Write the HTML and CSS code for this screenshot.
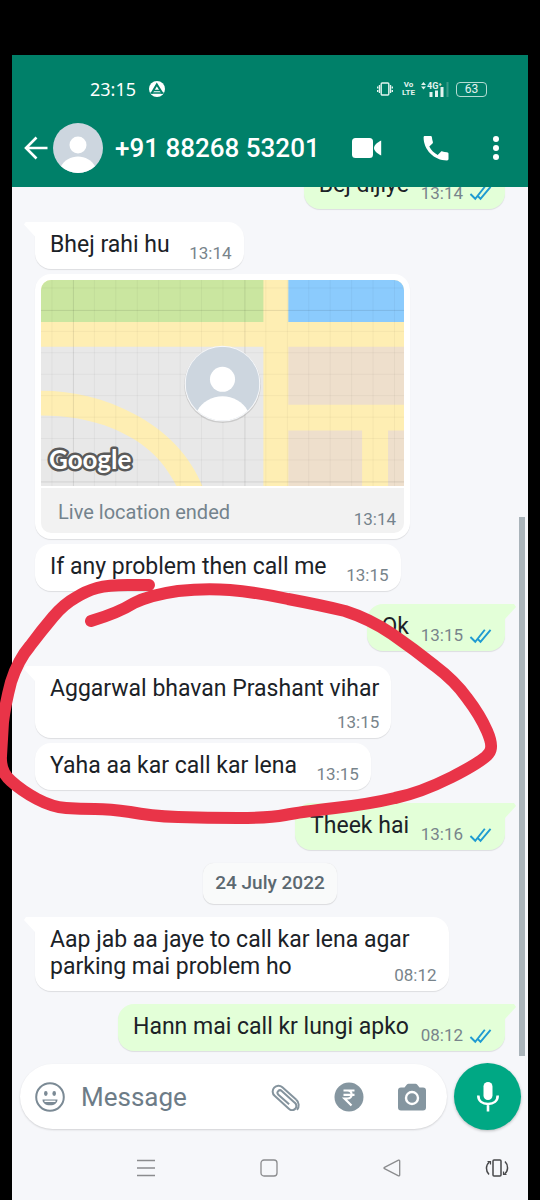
FILE: index.html
```html
<!DOCTYPE html>
<html lang="en">
<head>
<meta charset="utf-8">
<meta name="viewport" content="width=device-width, initial-scale=1">
<title>Chat</title>
<link rel="stylesheet" href="styles.css">
</head>
<body>
<svg class="defs" aria-hidden="true">
  <symbol id="ticks" viewBox="0 0 24 16"><path d="M1.500 9l5 5L16.500 1.500M9.500 11.500l2.500 2.500L22.500 1.500" fill="none" stroke="#1f9bd1" stroke-width="2"/></symbol>
  <symbol id="person" viewBox="0 0 50 50"><circle cx="25" cy="25" r="25" fill="#cdd6df"/><circle cx="25" cy="22" r="8.500" fill="#fff"/><path d="M8 43.300c3-6 10-9.800 17-9.800s14 3.800 17 9.800a25 25 0 0 1-34 0z" fill="#fff"/></symbol>
</svg>
<div class="phone">
  <header class="header">
    <div class="status">
      <span class="clock">23:15</span>
      <svg width="16" height="16" viewBox="0 0 16 16"><circle cx="8" cy="8" r="8" fill="#fff"/><path d="M2.500 12.500L7.800 3.500 13.500 12.500" fill="none" stroke="#008069" stroke-width="2"/><path d="M5 9.500h6M1.500 12h13" stroke="#008069" stroke-width="1.500"/></svg>
      <span class="spacer"></span>
      <svg class="vibrate" width="16" height="14" viewBox="0 0 16 14" fill="none" stroke="#e3f3ef" stroke-width="1.400"><rect x="4.200" y="1" width="7.600" height="12" rx="1"/><path d="M2.500 3v8M13.500 3v8" /><path d="M.7 4.500v2M.7 8v2M15.300 4.500v2M15.300 8v2"/></svg>
      <span class="volte"><span>Vo</span><span>LTE</span></span>
      <svg class="signal" width="30" height="16" viewBox="0 0 30 16"><path d="M0 4l2.500-3L5 4zM0 5.500l2.500 3 2.500-3z" fill="#e3f3ef"/><text x="6" y="8" class="net">4G⁺</text><path d="M8.500 11h3v5h-3zM14 9.500h3v6.500h-3zM19.500 6h3v10h-3z" fill="#e3f3ef"/><path d="M25.500 1h2v15h-2z" fill="#3a9a88"/></svg>
      <span class="battery">63</span>
    </div>
    <div class="topbar">
      <button class="plain" aria-label="Back"><svg width="24" height="24" viewBox="0 0 24 24" fill="none" stroke="#fff" stroke-width="2.600"><path d="M23.500 12H2M12.500 1.500L2 12l10.500 10.500"/></svg></button>
      <svg class="avatar" width="50" height="50"><use href="#person"/></svg>
      <h1 class="title">+91 88268 53201</h1>
      <button class="plain video" aria-label="Video call"><svg width="30" height="20" viewBox="0 0 30 20" fill="#fff"><rect x="0" y="0" width="21" height="20" rx="3.500"/><path d="M22 10c0-2.500 3-5.500 7.200-7.500v15C25 15.500 22 12.500 22 10z"/></svg></button>
      <button class="plain call" aria-label="Voice call"><svg width="26" height="26" viewBox="0 0 26 26" fill="#fff"><path d="M2 1h5.500c.8 0 1.300.5 1.400 1.200.2 1.700.5 3.300 1 4.800.2.600 0 1.100-.4 1.500L6.300 11.500c2 3.900 4.700 6.600 8.400 8.400l3.200-3.100c.4-.4 1-.5 1.500-.4 1.500.5 3 .8 4.600.9.900.1 1.500.6 1.500 1.400V24c0 .8-.6 1.400-1.500 1.400C11 25.400.600 14.500.600 2.400.600 1.500 1.200 1 2 1z"/></svg></button>
      <button class="plain more" aria-label="More options"><svg width="6" height="24" viewBox="0 0 6 24" fill="#fff"><circle cx="3" cy="3" r="3"/><circle cx="3" cy="12" r="3"/><circle cx="3" cy="21" r="3"/></svg></button>
    </div>
  </header>

  <main class="chat">
    <div class="msg out"><p class="text">Bej dijiye</p><span class="meta">13:14<svg class="ticks"><use href="#ticks"/></svg></span></div>
    <div class="msg in first"><p class="text">Bhej rahi hu</p><span class="meta">13:14</span></div>
    <div class="msg in location">
      <svg class="map" viewBox="0 0 364 207">
        <rect width="364" height="207" fill="#feeeb3"/>
        <path d="M0 0h223v42H0z" fill="#cae6a0"/>
        <path d="M248 0h116v42H248z" fill="#8bcbfd"/>
        <path d="M0 67h223v140H0z" fill="#e8e8e8"/>
        <path d="M248 67h116v58H248zM248 151h74v56h-74zM348 151h16v56h-16z" fill="#eedfcc"/>
        <path d="M0 111c32 0 65 8 93 23 33 17 57 43 69 73h-26c-15-30-36-46-64-58-22-9-47-13-72-13z" fill="#feeeb3"/>
        <path d="M11 0v207M53.500 0v207M75 0v207M96.500 0v207M118 0v207M139.500 0v207M161 0v207M182.500 0v207M225.500 0v207M247 0v207M268.500 0v207M290 0v207M311.500 0v207M333 0v207M354.500 0v207M0 8h364M0 51.500h364M0 73h364M0 94.500h364M0 116h364M0 137.500h364M0 159h364M0 180.500h364" fill="none" stroke="#000" stroke-opacity=".045"/>
        <path d="M32.500 0v207M204.500 0v207M0 30.500h364M0 202.500h364" fill="none" stroke="#000" stroke-opacity=".1"/>
        <circle cx="182" cy="105" r="38.500" fill="#000" opacity=".12"/>
        <circle cx="182" cy="104" r="38" fill="#f7f8fa"/>
        <use href="#person" x="145" y="67" width="74" height="74"/>
        <text x="8" y="190" class="google">Google</text>
      </svg>
      <div class="ended"><p>Live location ended</p><span>13:14</span></div>
    </div>
    <div class="msg in"><p class="text">If any problem then call me</p><span class="meta">13:15</span></div>
    <div class="msg out first"><p class="text">Ok</p><span class="meta">13:15<svg class="ticks"><use href="#ticks"/></svg></span></div>
    <div class="msg in first stacked"><p class="text">Aggarwal bhavan Prashant vihar</p><span class="meta">13:15</span></div>
    <div class="msg in"><p class="text">Yaha aa kar call kar lena</p><span class="meta">13:15</span></div>
    <div class="msg out first"><p class="text">Theek hai</p><span class="meta">13:16<svg class="ticks"><use href="#ticks"/></svg></span></div>
    <div class="date">24 July 2022</div>
    <div class="msg in first"><p class="text">Aap jab aa jaye to call kar lena agar parking mai problem ho</p><span class="meta">08:12</span></div>
    <div class="msg out first"><p class="text">Hann mai call kr lungi apko</p><span class="meta">08:12<svg class="ticks"><use href="#ticks"/></svg></span></div>
    <div class="scrollbar"></div>
  </main>

  <form class="composer">
    <div class="pill">
      <button type="button" class="plain" aria-label="Emoji"><svg width="30" height="30" viewBox="0 0 30 30"><circle cx="15" cy="15" r="13.800" fill="none" stroke="#7b8a95" stroke-width="2"/><ellipse cx="10.800" cy="11.500" rx="1.800" ry="2.400" fill="#7b8a95"/><ellipse cx="19.200" cy="11.500" rx="1.800" ry="2.400" fill="#7b8a95"/><path d="M7.500 17.500h15c0 3.500-3 5.800-7.500 5.800s-7.500-2.300-7.500-5.800z" fill="#7b8a95"/><path d="M9.500 19.300h11" stroke="#fff" stroke-width="1.400"/></svg></button>
      <input class="field" type="text" placeholder="Message" aria-label="Message">
      <button type="button" class="plain" aria-label="Attach"><svg width="32" height="28" viewBox="0 0 32 28" fill="none" stroke="#84939d" stroke-width="2"><g transform="rotate(42 16 14)"><path d="M26 8.500H7.500a5.800 5.800 0 0 0 0 11.600H27a4.200 4.200 0 0 0 4.500-4.200 4.200 4.200 0 0 0-4.500-4.200H9.500a2.500 2.500 0 0 0 0 5H24"/><path d="M26 8.500a7.300 7.300 0 0 1 7.500 7"/></g></svg></button>
      <button type="button" class="plain" aria-label="Payment"><svg width="30" height="30" viewBox="0 0 30 30"><circle cx="15" cy="15" r="14.500" fill="#8596a0"/><path d="M9.500 8.500h11M9.500 12.800h11M10 8.500h3.500c5.500 0 5.500 8 0 8h-3l7 7" fill="none" stroke="#fff" stroke-width="2.200"/></svg></button>
      <button type="button" class="plain" aria-label="Camera"><svg width="30" height="28" viewBox="0 0 30 28"><path d="M11.500.8h7q1 0 1.600.7l2.400 2.900H26a3 3 0 0 1 3 3v17a3 3 0 0 1-3 3H4a3 3 0 0 1-3-3v-17a3 3 0 0 1 3-3h3.500l2.400-2.900q.6-.7 1.600-.7z" fill="#8596a0"/><circle cx="15" cy="15" r="6" fill="none" stroke="#fff" stroke-width="2.400"/></svg></button>
    </div>
    <button type="button" class="mic" aria-label="Record voice message"><svg width="22" height="30" viewBox="0 0 22 30"><rect x="6.500" y="0" width="9" height="18" rx="4.500" fill="#fff"/><path d="M1.300 13.500c0 5.500 4.200 8.500 9.700 8.500s9.700-3 9.700-8.500M11 22v7.500" fill="none" stroke="#fff" stroke-width="2.600"/></svg></button>
  </form>

  <nav class="sysnav">
    <button class="plain" aria-label="Recent apps"><svg width="18" height="18" viewBox="0 0 18 18" stroke="#8b8c8e" stroke-width="1.400"><path d="M0 1.500h18M0 9h18M0 16.500h18"/></svg></button>
    <button class="plain" aria-label="Home"><svg width="18" height="18" viewBox="0 0 18 18" fill="none" stroke="#8b8c8e" stroke-width="1.300"><rect x="1" y="1" width="16" height="16" rx="3"/></svg></button>
    <button class="plain" aria-label="Back"><svg width="18" height="18" viewBox="0 0 18 18" fill="none" stroke="#8b8c8e" stroke-width="1.300"><path d="M1.500 8.300L15.500 1.200q1.200-.4 1.200.8v14q0 1.200-1.200.8L1.500 9.700q-1-.7 0-1.400z"/></svg></button>
    <button class="plain" aria-label="Rotate"><svg width="24" height="18" viewBox="0 0 24 18" fill="none" stroke="#47484a" stroke-width="1.500"><rect x="8" y="1" width="8" height="16" rx="1"/><path d="M4.500 3C.5 6 .5 12 4 15.500M19.500 15C23.500 12 23.500 6 20 2.500"/><path d="M2.500 2.500h3v3M21.500 15.500h-3v-3" stroke-width="1.200"/></svg></button>
  </nav>
</div>
<svg class="scribble" viewBox="0 0 540 1200" aria-hidden="true"><path d="M149 585H128Q108 585 97 588Q86 591 75 598Q64 604 53 617Q42 630 30 646Q18 660 11 682Q5 705 3 722Q2 740 1 756Q0 772 11 781Q22 791 37 799Q52 807 66 808Q80 809 95 809Q110 809 130 812Q150 816 178 817Q207 818 238 818Q270 818 285 815Q300 812 335 808Q370 804 395 798Q420 793 452 777Q485 760 489 753Q494 747 487 731Q480 715 467 698Q455 681 435 666Q415 650 392 634Q370 619 345 611Q320 605 288 599Q255 592 230 590Q205 588 178 591Q150 595 134 603Q118 613 91 621"/></svg>
</body>
</html>
```
FILE: styles.css
```css
* { box-sizing: border-box; }

body {
  margin: 0;
  min-height: 100vh;
  padding: 55px 12px 0;
  background: #000;
  font-family: Roboto, "Noto Sans", sans-serif;
  color: #1b2227;
  position: relative;
  overflow-x: hidden;
}

p, h1 { margin: 0; }
svg { display: block; flex: none; }
.defs { position: absolute; width: 0; height: 0; }

.phone {
  display: flex;
  flex-direction: column;
  height: calc(100vh - 55px);
  background: #f6f7fa;
}

.plain {
  display: flex;
  align-items: center;
  justify-content: center;
  flex: none;
  padding: 0;
  border: 0;
  background: none;
}

/* Header */
.header {
  flex: none;
  background: #008069;
  color: #fff;
  padding-bottom: 15px;
}
.status {
  display: flex;
  align-items: center;
  height: 68px;
  padding: 0 41px 0 78px;
}
.clock {
  font: 18px/24px "Noto Sans", sans-serif;
  margin-right: 13px;
}
.spacer { flex: 1; }
.vibrate { margin-right: 9px; }
.volte {
  display: flex;
  flex-direction: column;
  align-items: center;
  font-size: 8px;
  line-height: 8px;
  font-weight: 700;
  color: #e3f3ef;
  margin-right: 6px;
}
.net { font: 700 9px Roboto, sans-serif; fill: #e3f3ef; }
.battery {
  margin-left: 5px;
  width: 31px;
  height: 15px;
  border: 1px solid #b5dcd3;
  border-radius: 4px;
  font-size: 12px;
  line-height: 13px;
  text-align: center;
  color: #e3f3ef;
}
.topbar {
  display: flex;
  align-items: center;
  height: 49px;
  padding: 0 29px 0 12px;
}
.avatar { margin: 0 12px 0 5px; }
.title {
  flex: 1;
  font-size: 26px;
  line-height: 32px;
  font-weight: 500;
  white-space: nowrap;
}
.video { margin-right: 41px; }
.call { margin-right: 44px; }

/* Conversation */
.chat {
  flex: 1;
  min-height: 0;
  position: relative;
  overflow: hidden;
  display: flex;
  flex-direction: column;
  justify-content: flex-end;
  gap: 5px;
  padding: 0 23px 5px;
}
.msg {
  flex: none;
  position: relative;
  display: grid;
  max-width: 88%;
  padding: 9px 12px 7px 15px;
  border-radius: 16px;
  box-shadow: 0 1px 1px #0000001a;
}
.in { align-self: flex-start; background: #fff; }
.out { align-self: flex-end; background: #e3ffd8; padding-right: 13px; }
.first { margin-top: 8px; }
.in.first { border-top-left-radius: 0; }
.out.first { border-top-right-radius: 0; }
.first::before {
  content: "";
  position: absolute;
  top: 0;
  width: 11px;
  height: 15px;
  background: inherit;
}
.in.first::before {
  right: 100%;
  clip-path: polygon(2px 0, 100% 0, 100% 100%, 0 3px);
}
.out.first::before {
  left: 100%;
  clip-path: polygon(0 0, 9px 0, 100% 3px, 0 100%);
}
.text {
  grid-area: 1 / 1;
  font-size: 23px;
  line-height: 27px;
  padding-bottom: 4px;
}
.text::after {
  content: "";
  display: inline-block;
  width: 62px;
}
.out .text::after { width: 83px; }
.stacked.first { margin-top: 10px; padding-right: 12px; }
.stacked .text::after { display: block; height: 25px; }
.meta {
  grid-area: 1 / 1;
  align-self: end;
  justify-self: end;
  display: flex;
  align-items: center;
  gap: 6px;
  font-size: 17px;
  line-height: 17px;
  color: #78848b;
}
.ticks { width: 23px; height: 16px; }

.location { width: 375px; padding: 6px; }
.map { width: 100%; height: auto; border-radius: 10px 10px 0 0; }
.google {
  font: 700 26px Lato, sans-serif;
  fill: #fff;
  stroke: #5a5a5a;
  stroke-width: 5px;
  stroke-linejoin: round;
  paint-order: stroke;
}
.ended {
  display: flex;
  justify-content: space-between;
  align-items: flex-end;
  margin-top: 2px;
  height: 45px;
  padding: 0 8px 5px 17px;
  border-radius: 0 0 10px 10px;
  background: #f2f2f2;
  color: #74838d;
  font-size: 17px;
  line-height: 17px;
}
.ended p { font-size: 20px; line-height: 32px; }

.date {
  flex: none;
  align-self: center;
  margin-top: 8px;
  padding: 8px 12px 9px;
  border-radius: 11px;
  background: #f9fafa;
  box-shadow: 0 1px 1px #0000001a, 0 0 1px #0000001a;
  font-size: 19px;
  line-height: 24px;
  font-weight: 500;
  color: #5b6870;
}
.scrollbar {
  position: absolute;
  right: 3px;
  bottom: 0;
  width: 6px;
  height: 62%;
  background: #aab4ba;
}

/* Composer */
.composer {
  flex: none;
  display: flex;
  align-items: center;
  gap: 7px;
  padding: 7px 7px 0 8px;
}
.pill {
  flex: 1;
  min-width: 0;
  display: flex;
  align-items: center;
  gap: 33px;
  height: 65px;
  padding: 0 20px 0 15px;
  border-radius: 33px;
  background: #fff;
  box-shadow: 0 1px 2px #00000026;
}
.field {
  flex: 1;
  min-width: 0;
  margin-left: -17px;
  padding: 0;
  border: 0;
  background: none;
  font: 26px/32px Roboto, sans-serif;
  color: #1b2227;
}
.field::placeholder { color: #6d7c87; opacity: 1; }
.mic {
  flex: none;
  width: 67px;
  height: 67px;
  display: flex;
  align-items: center;
  justify-content: center;
  padding: 0;
  border: 0;
  border-radius: 50%;
  background: #00a884;
  box-shadow: 0 1px 3px #00000040;
}

.sysnav {
  flex: none;
  display: grid;
  grid-template-columns: 123fr 123fr 123fr 86fr;
  height: 70px;
  padding: 5px 0 0 72px;
  margin-right: -12px;
}

/* Hand-drawn mark over the conversation */
.scribble {
  position: absolute;
  top: 0;
  left: 0;
  width: 100%;
  pointer-events: none;
}
.scribble path {
  fill: none;
  stroke: #e93448;
  stroke-width: 12px;
  stroke-linecap: round;
  stroke-linejoin: round;
}
```
